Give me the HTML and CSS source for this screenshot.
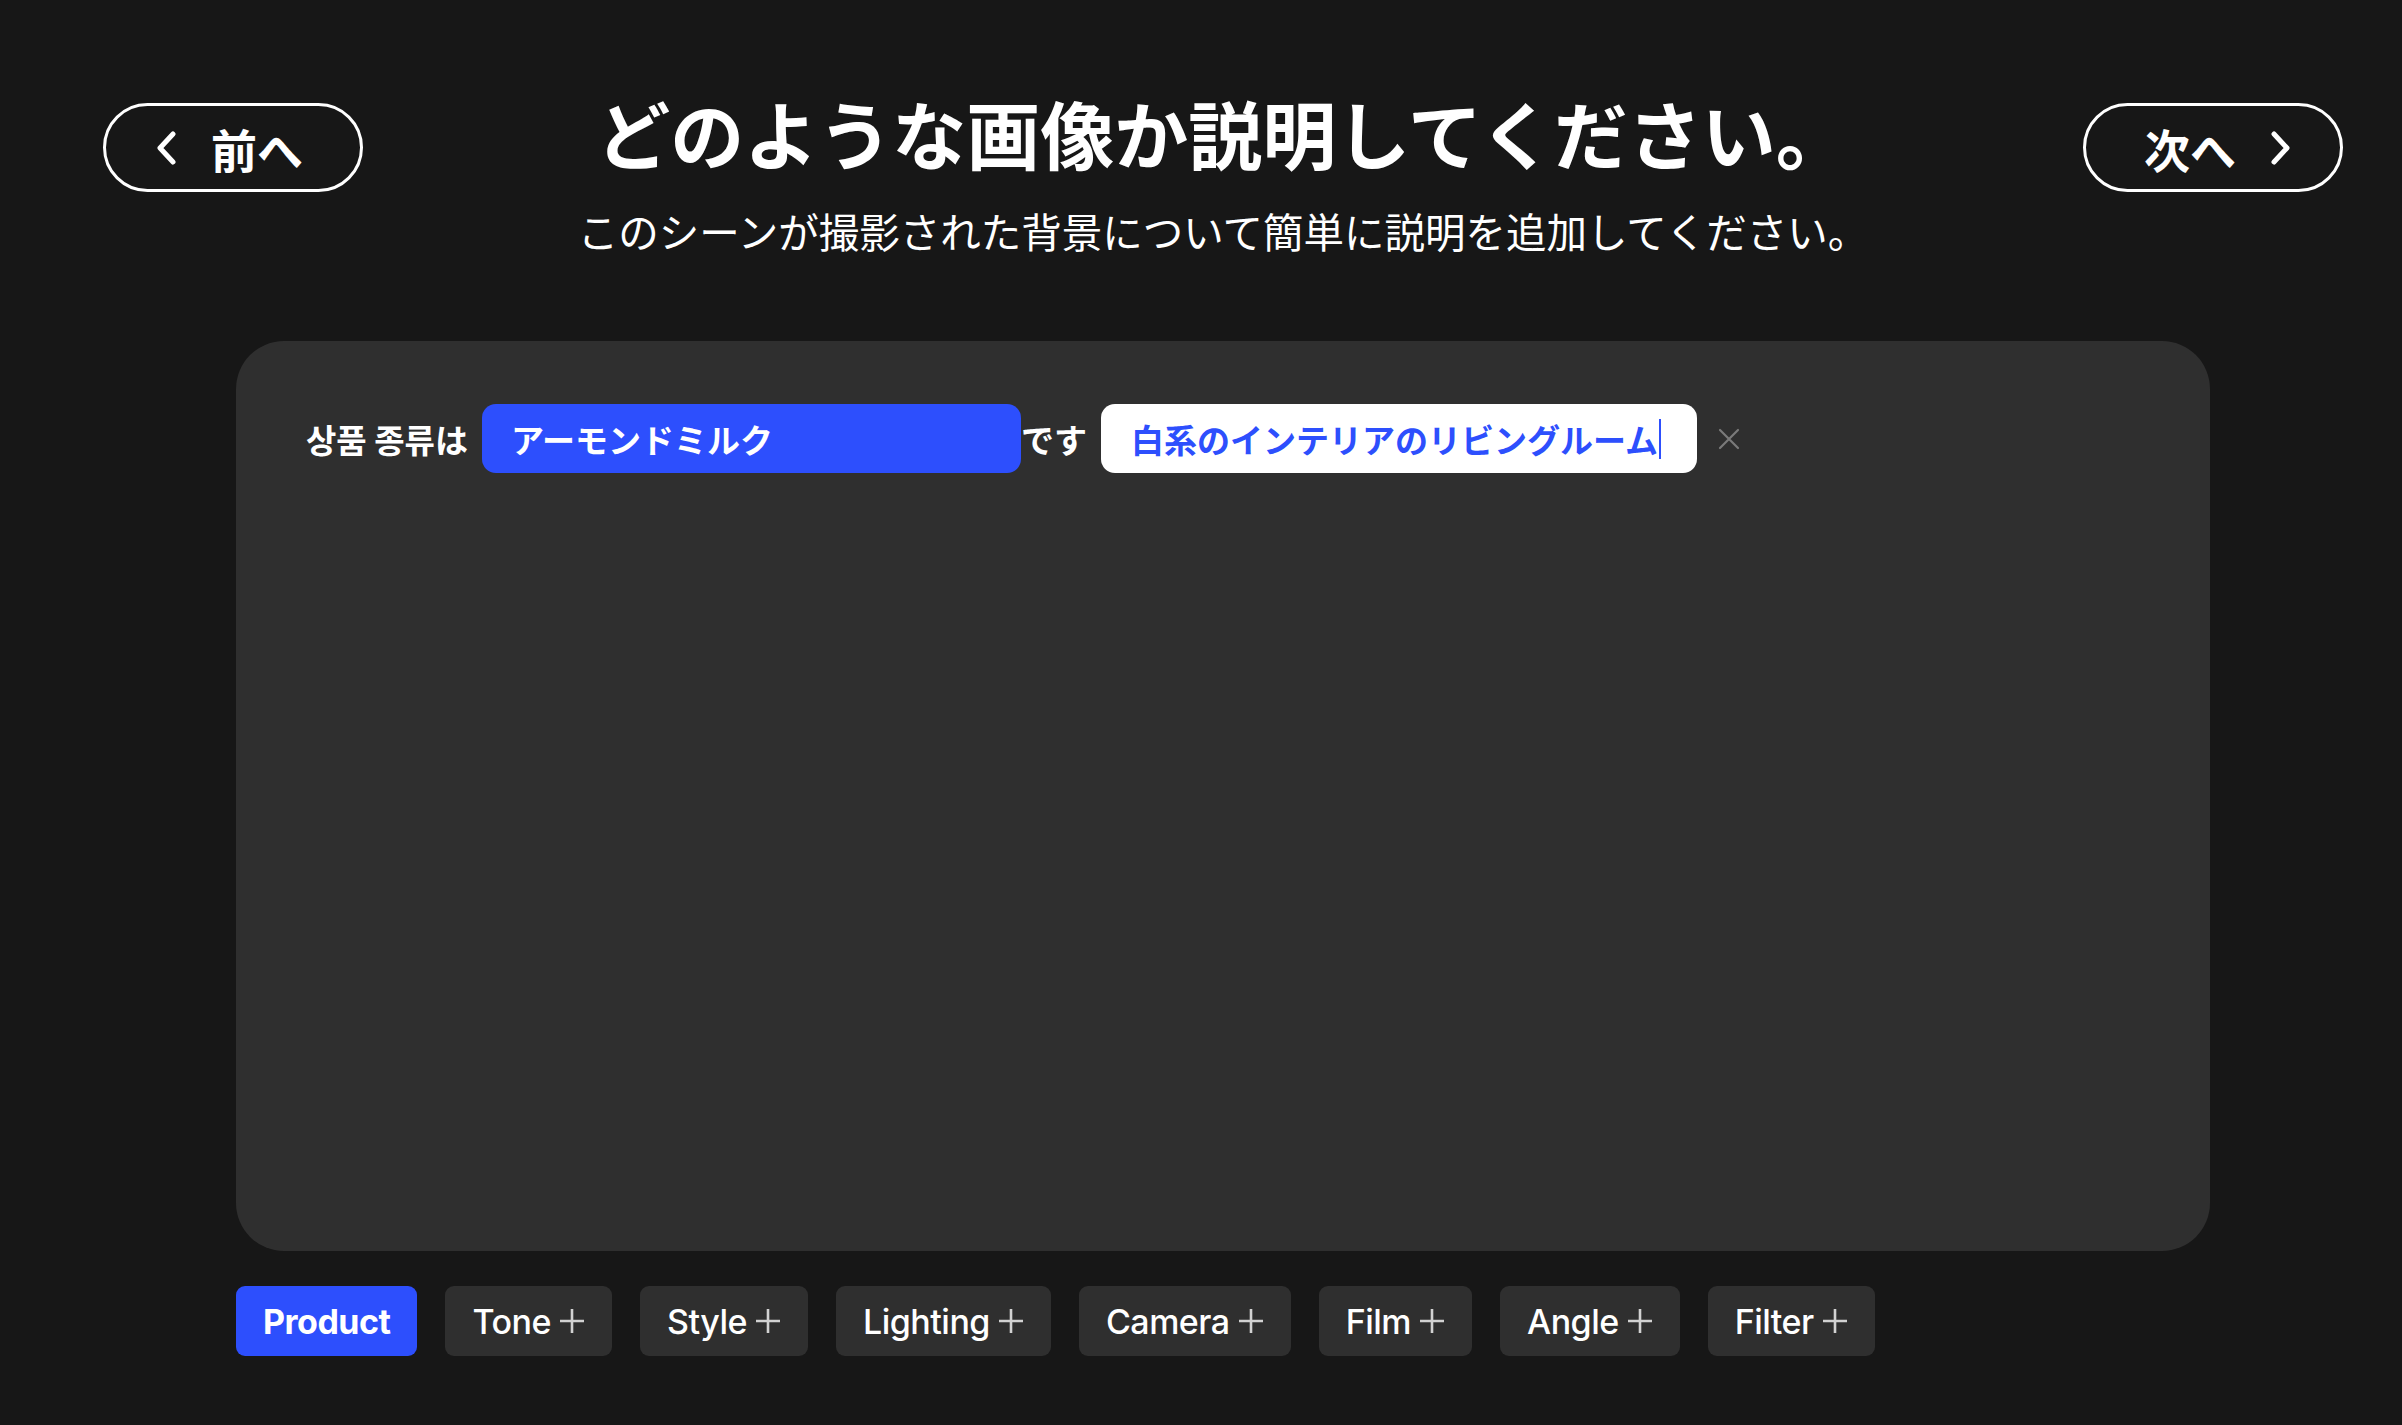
FILE: index.html
```html
<!DOCTYPE html>
<html lang="ja">
<head>
    <meta charset="UTF-8">
    <title>画像の説明</title>
    <link rel="stylesheet" href="styles.css">
</head>
<body>

<div class="page">
    <div class="header">
        <button class="nav-btn prev">
            <svg class="chevron" width="22" height="34" viewBox="0 0 22 34"><path d="M18 3 L5 17 L18 31" fill="none" stroke="#fff" stroke-width="5" stroke-linecap="round" stroke-linejoin="round"/></svg>
            <span>前へ</span>
        </button>
        <div class="heading">
            <h1 class="title">どのような画像か説明してください。</h1>
            <p class="subtitle">このシーンが撮影された背景について簡単に説明を追加してください。</p>
        </div>
        <button class="nav-btn next">
            <span>次へ</span>
            <svg class="chevron" width="22" height="34" viewBox="0 0 22 34"><path d="M4 3 L17 17 L4 31" fill="none" stroke="#fff" stroke-width="5" stroke-linecap="round" stroke-linejoin="round"/></svg>
        </button>
    </div>

    <div class="card">
        <div class="prompt-row">
            <span class="label">상품 종류は</span>
            <div class="field field-blue">アーモンドミルク</div>
            <span class="label">です</span>
            <div class="field field-white">白系のインテリアのリビングルーム<span class="caret"></span></div>
            <svg class="clear" width="22" height="22" viewBox="0 0 22 22"><path d="M2 2 L20 20 M20 2 L2 20" stroke="#7a7a7a" stroke-width="2.2" stroke-linecap="round"/></svg>
        </div>
    </div>

    <div class="tags">
        <div class="tag active">Product</div>
        <div class="tag">Tone <svg class="plus" width="26" height="26" viewBox="0 0 26 26"><path d="M13 1 V25 M1 13 H25" stroke="#d2d2d2" stroke-width="2.6"/></svg></div>
        <div class="tag">Style <svg class="plus" width="26" height="26" viewBox="0 0 26 26"><path d="M13 1 V25 M1 13 H25" stroke="#d2d2d2" stroke-width="2.6"/></svg></div>
        <div class="tag">Lighting <svg class="plus" width="26" height="26" viewBox="0 0 26 26"><path d="M13 1 V25 M1 13 H25" stroke="#d2d2d2" stroke-width="2.6"/></svg></div>
        <div class="tag">Camera <svg class="plus" width="26" height="26" viewBox="0 0 26 26"><path d="M13 1 V25 M1 13 H25" stroke="#d2d2d2" stroke-width="2.6"/></svg></div>
        <div class="tag">Film <svg class="plus" width="26" height="26" viewBox="0 0 26 26"><path d="M13 1 V25 M1 13 H25" stroke="#d2d2d2" stroke-width="2.6"/></svg></div>
        <div class="tag">Angle <svg class="plus" width="26" height="26" viewBox="0 0 26 26"><path d="M13 1 V25 M1 13 H25" stroke="#d2d2d2" stroke-width="2.6"/></svg></div>
        <div class="tag">Filter <svg class="plus" width="26" height="26" viewBox="0 0 26 26"><path d="M13 1 V25 M1 13 H25" stroke="#d2d2d2" stroke-width="2.6"/></svg></div>
    </div>
</div>

</body>
</html>
```

FILE: styles.css
```css
html, body {
    margin: 0;
    background-color: #171717;
    color: #fff;
    font-family: Inter, "Noto Sans CJK JP", "Noto Sans CJK KR", sans-serif;
}
.page {
    padding: 89px 59px 0 103px;
}
.header {
    display: grid;
    grid-template-columns: 260px 1fr 260px;
    align-items: start;
}
.nav-btn {
    margin-top: 14px;
    height: 89px;
    box-sizing: border-box;
    border: 3px solid #fff;
    border-radius: 45px;
    background: transparent;
    color: #fff;
    font-family: "Noto Sans CJK JP", sans-serif;
    font-size: 46px;
    font-weight: 700;
    display: flex;
    align-items: center;
    justify-content: center;
    gap: 34px;
    cursor: pointer;
}
.nav-btn.prev {
    padding-right: 14px;
}
.nav-btn.next {
    padding-left: 16px;
}
.chevron {
    display: block;
}
.heading {
    text-align: center;
}
.title {
    margin: 0;
    font-family: "Noto Sans CJK JP", sans-serif;
    font-size: 74px;
    font-weight: 700;
    line-height: 86px;
}
.subtitle {
    margin: 32px 0 0;
    font-family: "Noto Sans CJK JP", sans-serif;
    font-size: 40.5px;
    font-weight: 400;
    line-height: 48px;
}
.card {
    margin: 86px 133px 0;
    height: 910px;
    background-color: #2f2f2f;
    border-radius: 48px;
    box-sizing: border-box;
    padding: 63px 70px;
}
.prompt-row {
    display: flex;
    align-items: center;
    font-family: "Noto Sans CJK JP", "Noto Sans CJK KR", sans-serif;
    font-size: 33px;
    font-weight: 700;
}
.label {
    margin-right: 14px;
    white-space: nowrap;
}
.field {
    height: 69px;
    box-sizing: border-box;
    border-radius: 14px;
    display: flex;
    align-items: center;
    white-space: nowrap;
}
.field-blue {
    width: 539px;
    padding-left: 29px;
    background-color: #2d4ffd;
    color: #fff;
}
.field-white {
    width: 596px;
    padding-left: 30px;
    background-color: #fff;
    color: #2d4ffd;
}
.caret {
    display: inline-block;
    width: 2px;
    height: 40px;
    background-color: #2d4ffd;
    margin-left: 1px;
}
.clear {
    margin-left: 21px;
}
.tags {
    display: flex;
    gap: 28px;
    margin: 35px 133px 0;
}
.tag {
    height: 70px;
    box-sizing: border-box;
    padding: 0 27px;
    border-radius: 9px;
    background-color: #2f2f2f;
    display: flex;
    align-items: center;
    gap: 8px;
    font-size: 34px;
    font-weight: 500;
    letter-spacing: -0.5px;
}
.tag.active {
    background-color: #2d4ffd;
    font-weight: 700;
}
```
